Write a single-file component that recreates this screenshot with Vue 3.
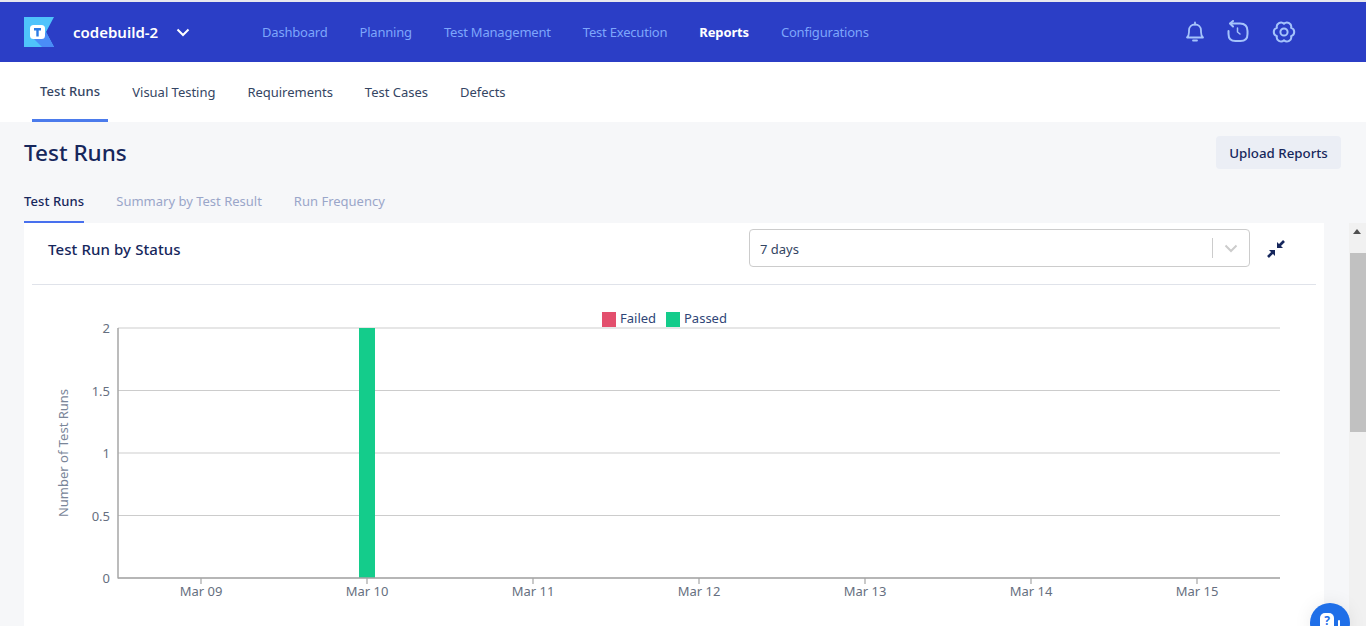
<template>
  <div class="page">
    <header class="topbar">
      <div class="brand">
        <svg class="logo" width="30" height="30" viewBox="0 0 30 30">
          <path d="M0 0H30L22 15L30 30H0Z" fill="#4fc3fb" />
          <path d="M22 15L30 30H18L10 22H18Z" fill="#4a8cf7" />
          <rect x="6" y="8" width="15" height="14" rx="3.5" fill="#fff" />
          <path d="M10 11H17V13.4H14.7V19.5H12.3V13.4H10Z" fill="#2c7be5" />
        </svg>
        <span class="project">codebuild-2</span>
        <svg class="caret" width="14" height="9" viewBox="0 0 14 9">
          <path d="M1.5 1.5L7 7L12.5 1.5" fill="none" stroke="#fff" stroke-width="2" />
        </svg>
      </div>
      <nav class="mainnav">
        <a v-for="item in mainNav" :key="item" :class="{ active: item === 'Reports' }">{{ item }}</a>
      </nav>
      <div class="topicons">
        <svg width="22" height="22" viewBox="0 0 22 22" fill="none" stroke="#a5c3fb" stroke-width="1.8">
          <path d="M3 16.5H19C17.4 15 17 13.5 17 11V9.5C17 6 14.5 3.5 11 3.5C7.5 3.5 5 6 5 9.5V11C5 13.5 4.6 15 3 16.5Z" stroke-linejoin="round" />
          <path d="M11 1.5V3.5M9 19.5H13" stroke-linecap="round" />
        </svg>
        <svg width="24" height="24" viewBox="0 0 24 24" fill="none" stroke="#a5c3fb" stroke-width="2">
          <path d="M3.5 3.5H13C18 3.5 20.5 6 20.5 11V14C20.5 18.5 18 21 13.5 21H8.5C4 21 1.5 18.5 1.5 14V11" stroke-linecap="round" />
          <path d="M6 1L3 3.5L6 6.5" stroke-linecap="round" stroke-linejoin="round" />
          <path d="M10.5 8V12L13 14" stroke-width="1.5" stroke-linecap="round" />
        </svg>
        <svg width="24" height="22" viewBox="0 0 24 22" fill="none" stroke="#a5c3fb" stroke-width="2">
          <path d="M12 2.8A4.25 4.25 0 0 1 19.1 6.9A4.25 4.25 0 0 1 19.1 15.1A4.25 4.25 0 0 1 12 19.2A4.25 4.25 0 0 1 4.9 15.1A4.25 4.25 0 0 1 4.9 6.9A4.25 4.25 0 0 1 12 2.8Z" stroke-linejoin="round" />
          <circle cx="12" cy="11" r="3.6" />
        </svg>
      </div>
    </header>

    <div class="subnav">
      <a v-for="item in subNav" :key="item" :class="{ active: item === 'Test Runs' }">{{ item }}</a>
    </div>

    <section class="heading">
      <h1>Test Runs</h1>
      <button class="upload">Upload Reports</button>
    </section>

    <div class="tabs">
      <a v-for="tab in tabs" :key="tab" :class="{ active: tab === 'Test Runs' }">{{ tab }}</a>
    </div>

    <div class="content">
      <main class="card">
        <div class="cardhead">
          <h2>Test Run by Status</h2>
          <div class="select">
            <span class="value">7 days</span>
            <span class="sep"></span>
            <svg width="14" height="9" viewBox="0 0 14 9">
              <path d="M1.5 1.5L7 7L12.5 1.5" fill="none" stroke="#ccc" stroke-width="2" />
            </svg>
          </div>
          <svg class="collapse" width="18" height="18" viewBox="0 0 18 18" fill="#16275c" stroke="#16275c">
            <path d="M10 8V2L16 8Z" stroke="none" />
            <path d="M12.5 5.5L17 1" stroke-width="2.6" />
            <path d="M8 10H2L8 16Z" stroke="none" />
            <path d="M5.5 12.5L1 17" stroke-width="2.6" />
          </svg>
        </div>
        <svg class="chart" width="1300" height="341" viewBox="0 62 1300 341">
          <!-- grid, coordinates relative to the card -->
          <line v-for="g in grid" :key="g.label" x1="94" x2="1256" :y1="g.y" :y2="g.y" :stroke="g.strong ? '#e6e6e6' : '#ccc'" :stroke-width="g.strong ? 2 : 1" />
          <text v-for="g in grid" :key="'l' + g.label" x="86" :y="g.y + 5" text-anchor="end" class="axis">{{ g.label }}</text>
          <rect x="335" y="105" width="16" height="250" fill="#14cc8b" />
          <line x1="94" x2="94" y1="105" y2="355.5" stroke="#a6a6a6" stroke-width="1.5" />
          <line x1="94" x2="1256" y1="355" y2="355" stroke="#a6a6a6" stroke-width="1.5" />
          <g v-for="t in ticks" :key="t.label">
            <line :x1="t.x" :x2="t.x" y1="355" y2="361" stroke="#a6a6a6" stroke-width="1.2" />
            <text :x="t.x" y="373" text-anchor="middle" class="axis">{{ t.label }}</text>
          </g>
          <text class="ytitle" transform="translate(44 230) rotate(-90)" text-anchor="middle">Number of Test Runs</text>
          <rect x="578" y="89" width="14" height="15" fill="#e34f6d" />
          <text x="596" y="100" class="legend">Failed</text>
          <rect x="642" y="89" width="14" height="15" fill="#14cc8b" />
          <text x="660" y="100" class="legend">Passed</text>
        </svg>
      </main>
      <div class="scrollbar">
        <span class="arrow"></span>
        <span class="thumb"></span>
      </div>
    </div>

    <div class="help">
      <span>?</span>
      <i></i>
    </div>
  </div>
</template>

<script setup>
const mainNav = ['Dashboard', 'Planning', 'Test Management', 'Test Execution', 'Reports', 'Configurations']
const subNav = ['Test Runs', 'Visual Testing', 'Requirements', 'Test Cases', 'Defects']
const tabs = ['Test Runs', 'Summary by Test Result', 'Run Frequency']

// y positions of the value axis, every other line is drawn heavier
const grid = [
  { label: '2', y: 105, strong: true },
  { label: '1.5', y: 167.5 },
  { label: '1', y: 230, strong: true },
  { label: '0.5', y: 292.5 },
  { label: '0', y: 355 }
]

const ticks = ['Mar 09', 'Mar 10', 'Mar 11', 'Mar 12', 'Mar 13', 'Mar 14', 'Mar 15'].map((label, i) => ({
  label,
  x: 177 + i * 166
}))
</script>

<style>
html, body {
  margin: 0;
  height: 626px;
  overflow: hidden;
}
</style>

<style scoped>
.page {
  position: relative;
  height: 626px;
  overflow: hidden;
  background: #f6f7f9;
  font-family: "Noto Sans", "Open Sans", sans-serif;
  color: #16275c;
}

.topbar {
  display: flex;
  align-items: center;
  height: 60px;
  margin-top: 2px;
  background: #2b3ec6;
  box-shadow: 0 -2px 0 #e8e8ee;
}

.brand {
  display: flex;
  align-items: center;
  width: 262px;
  padding-left: 24px;
  box-sizing: border-box;
  flex-shrink: 0;
}

.project {
  margin-left: 19px;
  font-size: 15px;
  font-weight: 600;
  color: #fff;
}

.caret {
  margin-left: 18px;
}

.mainnav {
  display: flex;
  gap: 32px;
  flex: 1;
  font-size: 13px;
  letter-spacing: -0.2px;
  color: #7ea6fb;
}

.mainnav .active {
  color: #fff;
  font-weight: 700;
  letter-spacing: -0.15px;
}

.topicons {
  display: flex;
  align-items: center;
  gap: 21px;
  padding-right: 70px;
}

.subnav {
  display: flex;
  gap: 16px;
  height: 60px;
  padding-left: 32px;
  background: #fff;
  font-size: 13px;
  letter-spacing: -0.02px;
  color: #344563;
}

.subnav a {
  display: flex;
  align-items: center;
  padding: 3px 8px 0;
  border-bottom: 3px solid transparent;
  box-sizing: border-box;
}

.subnav .active {
  border-bottom-color: #4b7bec;
  font-weight: 500;
  letter-spacing: 0.1px;
  padding-top: 0;
}

.heading {
  display: flex;
  align-items: center;
  justify-content: space-between;
  padding: 14px 25px 13px 24px;
  height: 33px;
}

h1 {
  margin: 0;
  font-size: 22.5px;
  font-weight: 500;
  color: #16275c;
}

.upload {
  width: 125px;
  height: 33px;
  border: 0;
  border-radius: 4px;
  background: #ebeef5;
  font: 500 13.3px "Noto Sans", sans-serif;
  color: #16275c;
}

.tabs {
  display: flex;
  gap: 32px;
  height: 41px;
  padding-left: 24px;
  align-items: stretch;
  font-size: 13px;
  color: #9aa6c9;
}

.tabs a {
  display: flex;
  align-items: center;
  padding-bottom: 2px;
  box-sizing: border-box;
  border-bottom: 2px solid transparent;
}

.tabs .active {
  color: #16275c;
  font-weight: 500;
  letter-spacing: 0.1px;
  border-bottom-color: #4870ee;
}

.content {
  display: flex;
  height: 403px;
  padding-left: 24px;
  justify-content: space-between;
}

.card {
  width: 1300px;
  background: #fff;
}

.cardhead {
  display: flex;
  align-items: center;
  height: 62px;
  margin: 0 8px;
  padding: 0 16px 10px;
  box-sizing: border-box;
  border-bottom: 1px solid #e0e3ea;
}

h2 {
  margin: 0;
  width: 701px;
  font-size: 15px;
  font-weight: 500;
  letter-spacing: 0.1px;
  color: #16275c;
}

.select {
  display: flex;
  align-items: center;
  width: 501px;
  height: 38px;
  margin-top: -1px;
  box-sizing: border-box;
  padding: 0 11px 0 10px;
  border: 1px solid #ccc;
  border-radius: 4px;
  font-size: 13px;
  color: #344563;
}

.value {
  flex: 1;
  padding-top: 2px;
}

.sep {
  width: 1px;
  height: 20px;
  margin-right: 11px;
  background: #ccc;
}

.collapse {
  margin-left: 17px;
}

.chart {
  display: block;
}

.axis {
  font-size: 13px;
  fill: #666f80;
}

.ytitle {
  font-size: 13px;
  fill: #7a8699;
}

.legend {
  font-size: 13px;
  fill: #2f4577;
}

.scrollbar {
  position: relative;
  width: 17px;
  background: #f1f1f1;
}

.arrow {
  position: absolute;
  top: 6px;
  left: 4px;
  border: 4px solid transparent;
  border-top: 0;
  border-bottom: 5px solid #505050;
}

.thumb {
  position: absolute;
  top: 30px;
  left: 1px;
  right: 0;
  height: 179px;
  background: #c1c1c1;
}

.help {
  position: absolute;
  left: 1310px;
  top: 603px;
  width: 40px;
  height: 40px;
  border-radius: 50%;
  background: #1f6fe8;
  box-shadow: 0 0 18px rgba(0, 0, 0, 0.08);
}

.help span {
  position: absolute;
  left: 10px;
  top: 10px;
  width: 14px;
  height: 22px;
  border-radius: 5px;
  background: #fff;
  color: #1f6fe8;
  font-size: 12px;
  font-weight: 700;
  line-height: 16px;
  text-align: center;
}

.help i {
  position: absolute;
  left: 28px;
  top: 17px;
  width: 2px;
  height: 10px;
  border-radius: 1px;
  background: #fff;
}
</style>
